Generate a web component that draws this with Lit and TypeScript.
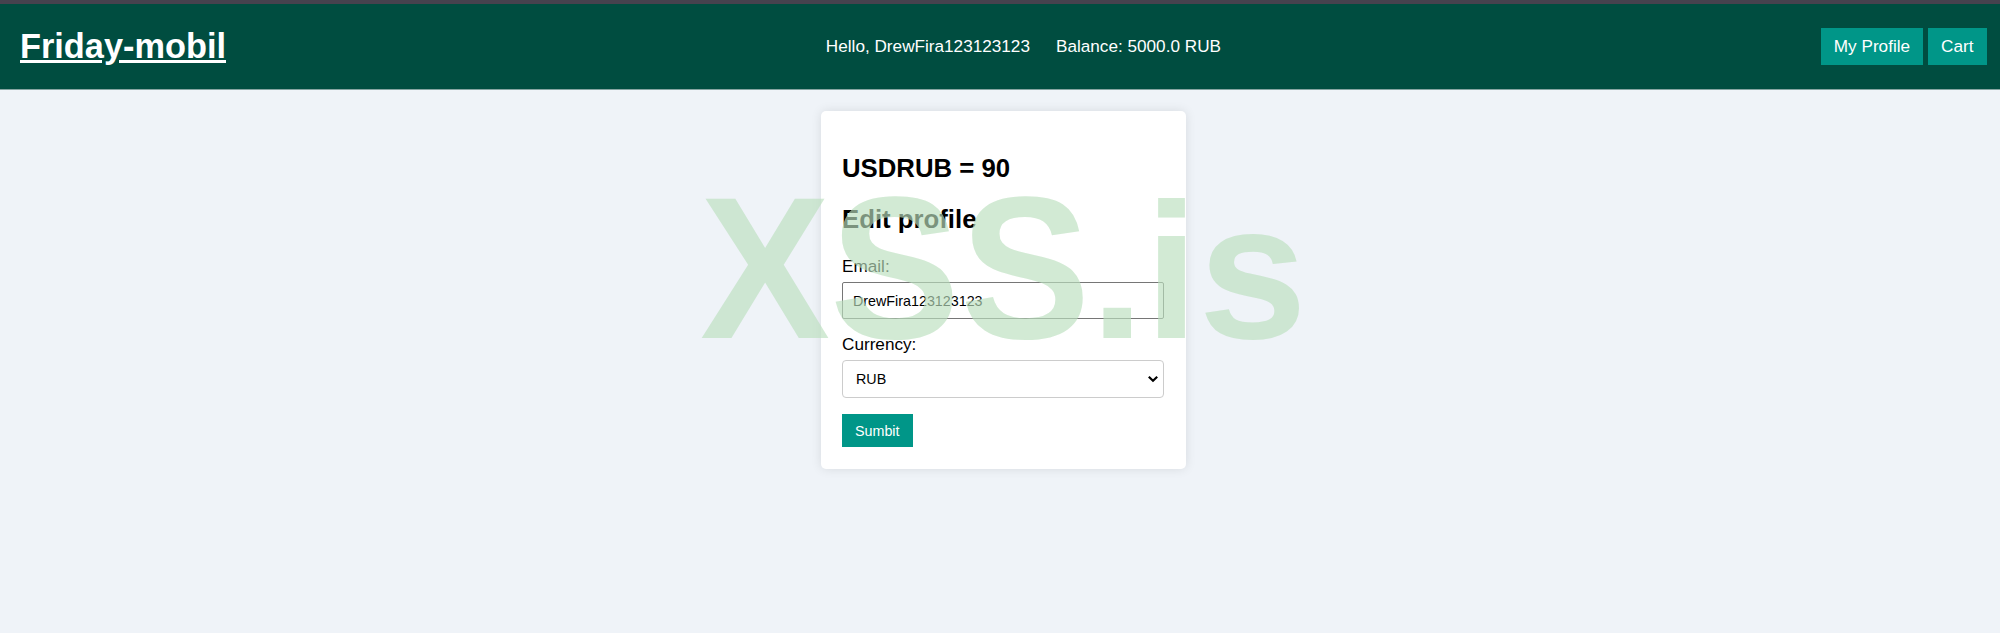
import { LitElement, html, css } from 'lit';
import { customElement, property, state } from 'lit/decorators.js';

@customElement('shop-header')
export class ShopHeader extends LitElement {
  static styles = css`
    :host {
      display: block;
      border-top: 4px solid #46424e;
      border-bottom: 1px solid #86a5a2;
      background-color: #004d40;
      color: #fff;
    }

    header {
      display: flex;
      align-items: center;
      justify-content: space-between;
      box-sizing: border-box;
      height: 85px;
      padding: 0 13.5px 0 20px;
    }

    h1 {
      margin: 0 0 2px;
      font-size: 34.33px;
      line-height: 40px;
    }

    a {
      color: inherit;
    }

    .account {
      display: flex;
      gap: 26px;
    }

    nav {
      display: flex;
      gap: 5px;
    }

    nav a {
      padding: 8px 13px 9px;
      background-color: #009688;
      line-height: 20px;
      text-decoration: none;
    }
  `;

  @property() user = '';

  @property() balance = '';

  render() {
    return html`
      <header>
        <h1><a href="#">Friday-mobil</a></h1>
        <div class="account">
          <span>Hello, ${this.user}</span>
          <span>Balance: ${this.balance}</span>
        </div>
        <nav>
          <a href="#profile">My Profile</a>
          <a href="#cart">Cart</a>
        </nav>
      </header>
    `;
  }
}

@customElement('profile-form')
export class ProfileForm extends LitElement {
  static styles = css`
    :host {
      display: block;
      box-sizing: border-box;
      width: 365px;
      padding: 21px 21.5px 22px;
      border-radius: 5px;
      background-color: #fff;
      box-shadow: 0 0 11px rgba(0, 0, 0, 0.1);
      color: #000;
    }

    h2 {
      margin: 21px 0;
      font-size: 25.75px;
      line-height: 30px;
    }

    h2:last-of-type {
      margin-bottom: 22px;
    }

    form {
      display: flex;
      flex-direction: column;
      align-items: flex-start;
    }

    label {
      margin-bottom: 6px;
      line-height: 20px;
    }

    label[for='currency'] {
      margin: -1px 0 6px;
    }

    input,
    select {
      box-sizing: border-box;
      width: 100%;
      height: 37px;
      margin: 0;
      background-color: #fff;
      color: #000;
      font: 14.3px 'Liberation Sans', Arial, sans-serif;
    }

    input {
      margin-bottom: 16px;
      padding: 0 10px;
      border: 1px solid #767676;
      border-radius: 2px;
    }

    .select {
      display: grid;
      align-items: center;
      width: 100%;
      margin-bottom: 16px;
    }

    .select > * {
      grid-area: 1 / 1;
    }

    select {
      height: 38px;
      padding: 0 13px;
      border: 1px solid #ccc;
      border-radius: 4px;
      appearance: none;
    }

    svg {
      justify-self: end;
      width: 12px;
      height: 8px;
      margin-right: 5px;
      pointer-events: none;
    }

    button {
      height: 33px;
      padding: 0 13px;
      border: none;
      background-color: #009688;
      color: #fff;
      font: 14.3px 'Liberation Sans', Arial, sans-serif;
    }
  `;

  @property() email = '';

  @property({ type: Number }) rate = 0;

  @state() private currency = 'RUB';

  private onCurrency(e: Event) {
    this.currency = (e.target as HTMLSelectElement).value;
  }

  render() {
    return html`
      <h2>USDRUB = ${this.rate}</h2>
      <h2>Edit profile</h2>
      <form @submit=${(e: Event) => e.preventDefault()}>
        <label for="email">Email:</label>
        <input id="email" name="email" .value=${this.email} />
        <label for="currency">Currency:</label>
        <div class="select">
          <select id="currency" name="currency" @change=${this.onCurrency}>
            ${['RUB', 'USD'].map(
              c => html`
                <option value=${c} ?selected=${c === this.currency}>
                  ${c}
                </option>
              `
            )}
          </select>
          <svg viewBox="0 0 12 8">
            <path
              d="M1.8 1.8 L6 5.8 L10.2 1.8"
              fill="none"
              stroke="#000"
              stroke-width="2.2"
            />
          </svg>
        </div>
        <button>Sumbit</button>
      </form>
    `;
  }
}

@customElement('app-root')
export class AppRoot extends LitElement {
  static styles = css`
    :host {
      display: block;
      position: relative;
      min-height: 100vh;
      overflow: hidden;
      background-color: #eff3f8;
      font: 17.16px 'Liberation Sans', Arial, sans-serif;
    }

    main {
      display: flex;
      justify-content: center;
      padding: 21px 0 0 6px;
    }

    .watermark {
      display: flex;
      position: absolute;
      top: 158px;
      left: 700px;
      color: rgba(187, 223, 190, 0.66);
      font-size: 195px;
      font-weight: bold;
      line-height: 224px;
      pointer-events: none;
    }

    /* stretched from the baseline so the capitals reach the dot of the i */
    .caps,
    .small {
      transform-origin: 0 179.6px;
    }

    .caps {
      transform: scaleY(1.041);
    }

    .small {
      transform: scaleY(0.985);
    }
  `;

  render() {
    return html`
      <shop-header user="DrewFira123123123" balance="5000.0 RUB"></shop-header>
      <main>
        <profile-form email="DrewFira123123123" rate="90"></profile-form>
      </main>
      <div class="watermark">
        <span class="caps">XSS.</span><span class="small">is</span>
      </div>
    `;
  }
}
